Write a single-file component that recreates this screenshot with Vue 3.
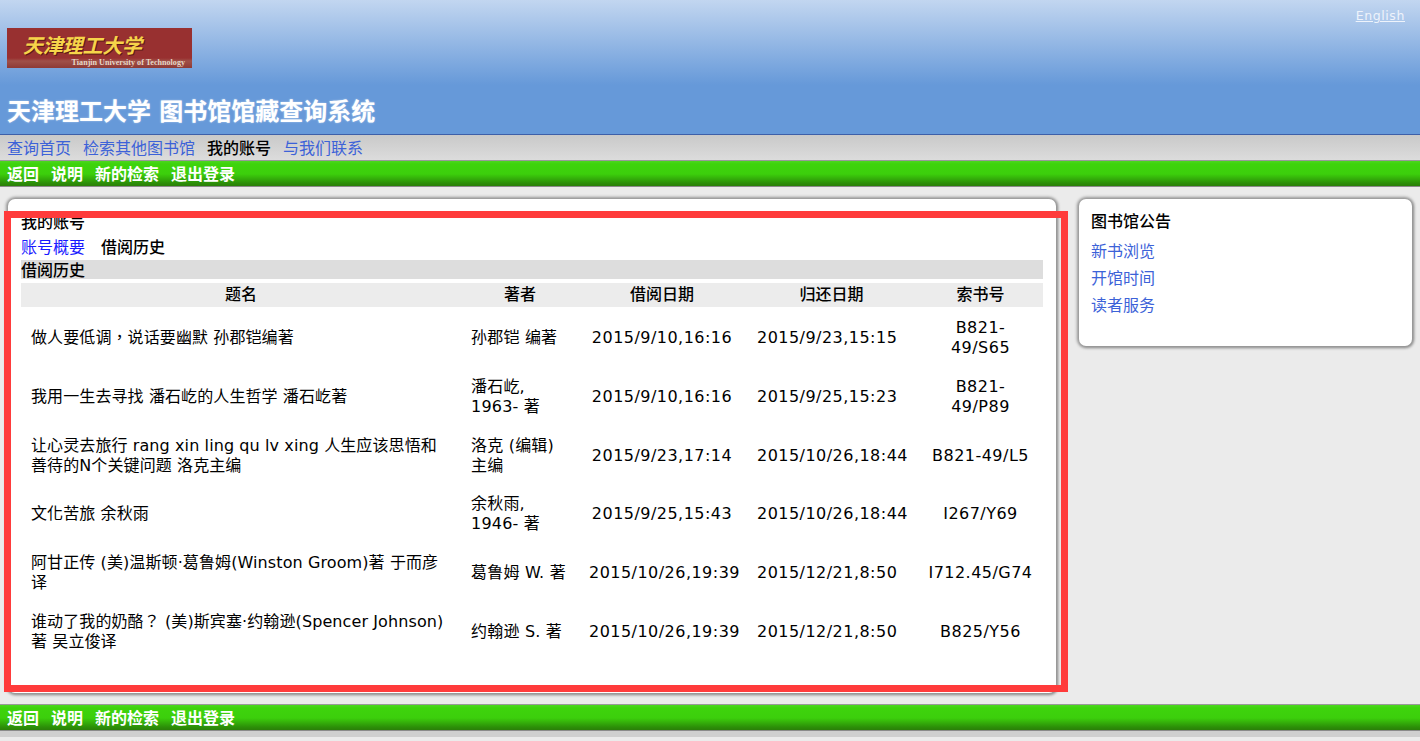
<template>
  <div class="page">
    <header class="banner">
      <a class="lang" href="#">English</a>
      <div class="logo">
        <span class="logo-cn">天津理工大学</span>
        <span class="logo-en">Tianjin University of Technology</span>
      </div>
      <h1 class="site-title">天津理工大学 图书馆馆藏查询系统</h1>
    </header>

    <nav class="top-nav">
      <a v-for="item in topNav" :key="item.label" href="#" :class="{ active: item.active }">{{ item.label }}</a>
    </nav>

    <div class="green-bar">
      <a v-for="item in actions" :key="item" href="#">{{ item }}</a>
    </div>

    <main class="content">
      <section class="card main-card">
        <h2 class="account-title">我的账号</h2>
        <div class="tabs">
          <a href="#">账号概要</a>
          <span>借阅历史</span>
        </div>
        <div class="section-bar">借阅历史</div>
        <table class="history">
          <colgroup>
            <col class="c-title">
            <col class="c-author">
            <col class="c-date">
            <col class="c-return">
            <col class="c-call">
          </colgroup>
          <thead>
            <tr>
              <th>题名</th>
              <th>著者</th>
              <th>借阅日期</th>
              <th>归还日期</th>
              <th>索书号</th>
            </tr>
          </thead>
          <tbody>
            <tr v-for="row in rows" :key="row.title">
              <td class="book">{{ row.title }}</td>
              <td class="author">{{ row.author }}</td>
              <td>{{ row.borrowed }}</td>
              <td class="returned">{{ row.returned }}</td>
              <td class="call">{{ row.call }}</td>
            </tr>
          </tbody>
        </table>
      </section>

      <aside class="card side-card">
        <h3>图书馆公告</h3>
        <a href="#">新书浏览</a>
        <a href="#">开馆时间</a>
        <a href="#">读者服务</a>
      </aside>
    </main>

    <div class="green-bar bottom">
      <a v-for="item in actions" :key="item" href="#">{{ item }}</a>
    </div>
    <div class="foot-strip"></div>

    <div class="highlight"></div>
  </div>
</template>

<script setup>
const topNav = [
  { label: '查询首页' },
  { label: '检索其他图书馆' },
  { label: '我的账号', active: true },
  { label: '与我们联系' }
]

const actions = ['返回', '说明', '新的检索', '退出登录']

const rows = [
  { title: '做人要低调，说话要幽默 孙郡铠编著', author: '孙郡铠 编著', borrowed: '2015/9/10,16:16', returned: '2015/9/23,15:15', call: 'B821-49/S65' },
  { title: '我用一生去寻找 潘石屹的人生哲学 潘石屹著', author: '潘石屹, 1963- 著', borrowed: '2015/9/10,16:16', returned: '2015/9/25,15:23', call: 'B821-49/P89' },
  { title: '让心灵去旅行 rang xin ling qu lv xing 人生应该思悟和善待的N个关键问题 洛克主编', author: '洛克 (编辑) 主编', borrowed: '2015/9/23,17:14', returned: '2015/10/26,18:44', call: 'B821-49/L5' },
  { title: '文化苦旅 余秋雨', author: '余秋雨, 1946- 著', borrowed: '2015/9/25,15:43', returned: '2015/10/26,18:44', call: 'I267/Y69' },
  { title: '阿甘正传 (美)温斯顿·葛鲁姆(Winston Groom)著 于而彦译', author: '葛鲁姆 W. 著', borrowed: '2015/10/26,19:39', returned: '2015/12/21,8:50', call: 'I712.45/G74' },
  { title: '谁动了我的奶酪？ (美)斯宾塞·约翰逊(Spencer Johnson)著 吴立俊译', author: '约翰逊 S. 著', borrowed: '2015/10/26,19:39', returned: '2015/12/21,8:50', call: 'B825/Y56' }
]
</script>

<style>
html, body {
  margin: 0;
  overflow: hidden;
}
</style>

<style scoped>
.page {
  position: relative;
  height: 741px;
  overflow: hidden;
  background: #ebebeb;
  color: #000;
  font-family: "DejaVu Sans", "Noto Sans CJK SC", sans-serif;
  font-size: 16px;
  line-height: 20px;
}

a {
  text-decoration: none;
}

.banner {
  position: relative;
  height: 135px;
  box-sizing: border-box;
  padding: 28px 7px 0;
  background: linear-gradient(to bottom, #c2d6f0 0, #6699d9 85px, #6699d9 100%);
  border-bottom: 1px solid #3d5fa8;
}

.lang {
  position: absolute;
  top: 6px;
  right: 15px;
  color: #eef3fb;
  font-size: 12.5px;
  letter-spacing: 0.6px;
  text-decoration: underline;
}

.logo {
  position: relative;
  width: 185px;
  height: 40px;
  overflow: hidden;
  background: linear-gradient(to bottom, #983030 0, #983030 30px, #a05048 33px, #8e3a36 40px);
}

.logo-cn {
  position: absolute;
  top: 5px;
  left: 16px;
  color: #f6d44a;
  font-size: 20px;
  line-height: 26px;
  font-style: italic;
  font-weight: 700;
  letter-spacing: -0.2px;
  text-shadow: 1px 1px 0 #5a1a14;
  white-space: nowrap;
}

.logo-en {
  position: absolute;
  top: 30px;
  right: 7px;
  color: #e6d8c8;
  font-family: "Liberation Serif", serif;
  font-size: 8.1px;
  line-height: 9px;
  font-weight: 700;
  white-space: nowrap;
}

.site-title {
  margin: 28px 0 0;
  color: #fff;
  font-size: 24px;
  line-height: 32px;
  font-weight: 700;
  text-shadow: 0 0 2px rgba(255, 255, 255, 0.5);
  white-space: nowrap;
}

.top-nav {
  display: flex;
  gap: 12px;
  height: 26px;
  padding: 3px 7px 0;
  box-sizing: border-box;
  background: linear-gradient(to bottom, #c9c9c9, #dcdcdc);
  border-bottom: 1px solid #999;
  line-height: 22px;
}

.top-nav a {
  color: #3c62d8;
}

.top-nav a.active {
  color: #000;
  font-weight: 500;
}

.green-bar {
  display: flex;
  gap: 12px;
  height: 24px;
  padding: 1px 7px 0;
  line-height: 25px;
  background: linear-gradient(to bottom, #4cd620 0, #3ed40c 3px, #3ccf0c 13px, #2c8f08 22px, #2a7f08 100%);
  border-bottom: 1px solid #8a8a8a;
}

.green-bar.bottom {
  border-top: 1px solid #999;
}

.green-bar a {
  color: #fff;
  font-weight: 700;
}

.content {
  display: flex;
  align-items: flex-start;
  gap: 23px;
  height: 517px;
  box-sizing: border-box;
  padding: 12px 8px 0;
}

.card {
  background: #fff;
  border-radius: 7px;
  box-shadow: 0 0 3px 2px #969696, 1px 1px 3px #888;
}

.main-card {
  width: 1048px;
  height: 494px;
  flex: none;
  box-sizing: border-box;
  padding: 14px 13px 0;
}

.account-title {
  margin: 0;
  font-size: 16px;
  line-height: 20px;
  font-weight: 500;
}

.tabs {
  display: flex;
  gap: 16px;
  margin-top: 5px;
  line-height: 20px;
  font-weight: 500;
}

.tabs a {
  color: #1a1aff;
  font-weight: 400;
}

.section-bar {
  width: 1022px;
  height: 19px;
  margin-top: 2px;
  background: #ddd;
  line-height: 21px;
  font-weight: 500;
}

.history {
  width: 1022px;
  margin-top: 4px;
  table-layout: fixed;
  border-collapse: collapse;
}

.c-title { width: 440px; }
.c-author { width: 118px; }
.c-date { width: 166px; }
.c-return { width: 173px; }
.c-call { width: 125px; }

.history th {
  height: 24px;
  padding: 0;
  background: #ececec;
  font-weight: 500;
  line-height: 24px;
}

.history td {
  height: 58.7px;
  box-sizing: border-box;
  padding: 4px 10px 0;
  text-align: center;
  vertical-align: middle;
  letter-spacing: 0.47px;
}

.history td.author {
  text-align: left;
  letter-spacing: 0.2px;
}

/* the source page shows centred fullwidth punctuation in book titles */
.history td.book {
  padding-right: 12px;
  text-align: left;
  font-family: "DejaVu Sans", "Noto Sans CJK TC", sans-serif;
  letter-spacing: 0.1px;
}

.history td.returned {
  padding-left: 12px;
  padding-right: 0;
  text-align: left;
}

.history td.call {
  padding: 4px 9px 0;
}

.side-card {
  display: flex;
  flex-direction: column;
  align-items: flex-start;
  width: 333px;
  height: 147px;
  flex: none;
  box-sizing: border-box;
  padding: 13px 12px 0;
}

.side-card h3 {
  margin: 0 0 6px;
  font-size: 16px;
  line-height: 20px;
  font-weight: 500;
}

.side-card a {
  color: #3c62d8;
  line-height: 27px;
}

.foot-strip {
  height: 6px;
  background: #cfcfcf;
}

/* red annotation frame sitting on top of the screenshot */
.highlight {
  position: absolute;
  left: 4px;
  top: 211px;
  width: 1064px;
  height: 481px;
  box-sizing: border-box;
  border: 7px solid #ff3b3b;
  pointer-events: none;
}
</style>
